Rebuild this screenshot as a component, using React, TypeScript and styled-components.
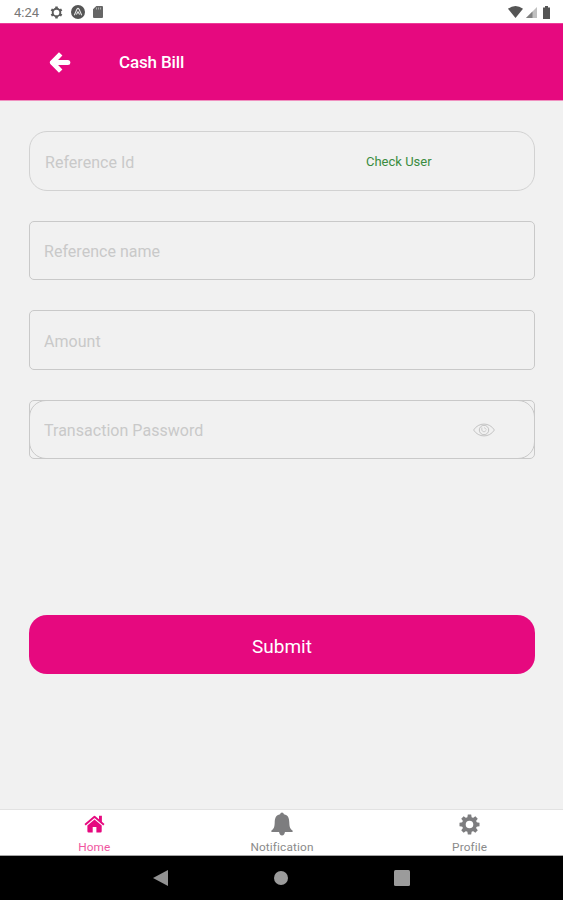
import React from "react";
import styled, { createGlobalStyle } from "styled-components";

const PINK = "#e6097f";

const GlobalStyle = createGlobalStyle`
  * { box-sizing: border-box; }
  body { margin: 0; background: #f1f1f1; font-family: Roboto, "Liberation Sans", sans-serif; }
  button, input { font: inherit; letter-spacing: inherit; }
`;

const Screen = styled.div`
  width: 563px;
  height: 900px;
  display: flex;
  flex-direction: column;
  overflow: hidden;
  background: #f1f1f1;
`;

const StatusBar = styled.div`
  height: 23px;
  flex: none;
  display: flex;
  justify-content: space-between;
  padding: 1px 13px 0 14px;
  background: #fff;
  color: #5c5c5c;
`;

const StatusGroup = styled.div<{ $gap: number }>`
  display: flex;
  align-items: center;
  gap: ${(p) => p.$gap}px;
`;

const Clock = styled.span`
  width: 27px;
  margin-right: 1px;
  font-size: 13px;
  white-space: nowrap;
  color: #777;
`;

const Header = styled.header`
  height: 78px;
  flex: none;
  display: flex;
  align-items: center;
  padding: 0 0 0 49px;
  color: #fff;
  background: ${PINK};
  border-top: 1px solid #ec3d98;
  border-bottom: 1px solid #f091c0;
`;

const BackButton = styled.button`
  display: flex;
  width: 70px;
  padding: 0;
  border: 0;
  background: none;
  color: #fff;
`;

const Title = styled.h1`
  margin: 0;
  font-size: 17px;
  font-weight: 500;
  letter-spacing: -0.15px;
`;

const Form = styled.form`
  flex: 1;
  display: flex;
  flex-direction: column;
  padding: 30px 28px 0 29px;
`;

const Field = styled.div<{ $radius: number; $height: number; $gap: number; $inset: number; $line?: string }>`
  position: relative;
  flex: none;
  display: flex;
  align-items: center;
  height: ${(p) => p.$height}px;
  margin-bottom: ${(p) => p.$gap}px;
  padding-left: ${(p) => p.$inset}px;
  border: 1px solid ${(p) => p.$line ?? "#c9c9c9"};
  border-radius: ${(p) => p.$radius}px;
`;

const InnerOutline = styled.div`
  position: absolute;
  inset: -1px;
  border: 1px solid #c9c9c9;
  border-radius: 17px;
  pointer-events: none;
`;

const Input = styled.input`
  flex: 1;
  min-width: 0;
  padding: 2px 0 0;
  border: 0;
  outline: 0;
  background: none;
  font-size: 16px;
  letter-spacing: 0.03px;
  color: #555;
  &::placeholder { color: #c9c9c9; opacity: 1; }
`;

const CheckUser = styled.button`
  width: 168px;
  padding: 0;
  border: 0;
  background: none;
  text-align: left;
  font-size: 13px;
  color: #3a8c40;
`;

const EyeButton = styled.button`
  display: flex;
  padding: 0;
  margin-right: 39px;
  border: 0;
  background: none;
  color: #c4c4c4;
`;

const Submit = styled.button`
  flex: none;
  height: 59px;
  margin-top: 126px;
  padding: 3px 0 0;
  border: 0;
  border-radius: 18px;
  background: ${PINK};
  color: #fff;
  font-size: 19px;
`;

const TabBar = styled.nav`
  height: 47px;
  flex: none;
  display: grid;
  grid-template-columns: repeat(3, 1fr);
  background: #fff;
  border-top: 1px solid #e2e2e2;
  border-bottom: 1px solid #a5a5a5;
`;

const Tab = styled.a<{ $active?: boolean }>`
  display: flex;
  flex-direction: column;
  align-items: center;
  padding-left: 1px;
  font-size: 11.8px;
  line-height: 14px;
  letter-spacing: 0.15px;
  color: ${(p) => (p.$active ? "#f0569f" : "#8a8a8a")};
  svg { color: ${(p) => (p.$active ? PINK : "#7d7d7f")}; }
`;

const TabIcon = styled.span`
  height: 30px;
  display: flex;
  align-items: center;
  padding-bottom: 2px;
`;

const SystemNav = styled.div`
  height: 44px;
  flex: none;
  display: flex;
  align-items: center;
  justify-content: space-between;
  padding: 0 153px;
  background: #000;
`;

const TEETH = [0, 45, 90, 135, 180, 225, 270, 315];

const GearIcon = () => (
  <svg width="21" height="21" viewBox="0 0 21 21">
    <circle cx="10.5" cy="10.5" r="5.7" fill="none" stroke="currentColor" strokeWidth="3.8" />
    {TEETH.map((a) => (
      <path key={a} d="M8.8.5H12.2L12.7 4H8.3Z" fill="currentColor" transform={`rotate(${a} 10.5 10.5)`} />
    ))}
  </svg>
);

const SmallGearIcon = () => (
  <svg width="13" height="13" viewBox="0 0 13 13">
    <circle cx="6.5" cy="6.5" r="3.8" fill="none" stroke="currentColor" strokeWidth="1.9" />
    {[0, 60, 120, 180, 240, 300].map((a) => (
      <path key={a} d="M5.3.5H7.7L8 3H5Z" fill="currentColor" transform={`rotate(${a} 6.5 6.5)`} />
    ))}
  </svg>
);

const ArrowIcon = () => (
  <svg width="22" height="23" viewBox="0 0 22 23" fill="none" stroke="currentColor" strokeLinejoin="round">
    <path d="M11.7 2.9 3.3 11.5 11.7 20.1" strokeWidth="4.8" />
    <path d="M4 11.5H18.8" strokeWidth="5" strokeLinecap="round" />
  </svg>
);

const HomeIcon = () => (
  <svg width="21" height="18" viewBox="0 0 21 18" fill="currentColor">
    <path d="M10.5 4.4 17.7 10.5V16.2Q17.7 17.4 16.5 17.4H12.4V12H8.7V17.4H4.6Q3.4 17.4 3.4 16.2V10.5Z" />
    <path d="M1.1 9.7 10.5 1.8 19.9 9.7" fill="none" stroke="currentColor" strokeWidth="1.9" strokeLinejoin="round" />
    <path d="M15 .8H17.9V7.5L15 5Z" />
  </svg>
);

const BellIcon = () => (
  <svg width="22" height="24" viewBox="0 0 22 24" fill="currentColor">
    <path d="M11 .6Q12.6.6 12.9 2.3C17.2 3.1 18.2 6.4 18.3 10.4 18.4 15 19.3 17 21.6 18.4V20H.4V18.4C2.7 17 3.6 15 3.7 10.4 3.8 6.4 4.8 3.1 9.1 2.3Q9.4.6 11 .6Z" />
    <path d="M8 19.8H14Q13.5 23.4 11 23.4T8 19.8Z" />
  </svg>
);

const AppBadgeIcon = () => (
  <svg width="14" height="14" viewBox="0 0 14 14">
    <circle cx="7" cy="7" r="7" fill="#555" />
    <path d="M3.3 10.2 5.9 4.2Q7 2.6 8.1 4.2L10.7 10.2M5.4 9.6 7 6.8 8.6 9.6" fill="none" stroke="#e5e5e5" strokeWidth="1.1" />
  </svg>
);

const SdCardIcon = () => (
  <svg width="10" height="12" viewBox="0 0 10 12">
    <path d="M3.3 0H9Q10 0 10 1V11Q10 12 9 12H1Q0 12 0 11V3.3Z" fill="#666" />
    <path d="M3.5 1.5V3.5M5.5 1.5V3.5M7.5 1.5V3.5" stroke="#aaa" />
  </svg>
);

const WifiIcon = () => (
  <svg width="15" height="12" viewBox="0 0 15 12">
    <path d="M0 2.8Q7.5-2.8 15 2.8L7.5 12Z" fill="#555" />
  </svg>
);

const SignalIcon = () => (
  <svg width="11" height="11" viewBox="0 0 11 11">
    <path d="M11 0V11H0Z" fill="#c0c0c0" />
    <path d="M6.5 4.5V11H0Z" fill="#808080" />
  </svg>
);

const BatteryIcon = () => (
  <svg width="7" height="13" viewBox="0 0 7 13">
    <path d="M2 0H5V1.5H7V13H0V1.5H2Z" fill="#555" />
  </svg>
);

const EyeIcon = () => (
  <svg width="22" height="14" viewBox="0 0 22 14" fill="none" stroke="currentColor">
    <path d="M.6 7C5.5-.9 16.5-.9 21.4 7 16.5 14.9 5.5 14.9.6 7Z" />
    <circle cx="11" cy="7" r="4.7" />
    <path d="M8.8 4.5V7.5Q11 10.5 13.2 7.5M11 4.5 13.5 6.5" strokeWidth=".8" />
  </svg>
);

export default function App() {
  return (
    <>
      <GlobalStyle />
      <Screen>
        <StatusBar>
          <StatusGroup $gap={8}>
            <Clock>4:24</Clock>
            <SmallGearIcon />
            <AppBadgeIcon />
            <SdCardIcon />
          </StatusGroup>
          <StatusGroup $gap={3}>
            <WifiIcon />
            <SignalIcon />
            <span />
            <BatteryIcon />
          </StatusGroup>
        </StatusBar>
        <Header>
          <BackButton type="button" aria-label="Back">
            <ArrowIcon />
          </BackButton>
          <Title>Cash Bill</Title>
        </Header>
        <Form onSubmit={(e) => e.preventDefault()}>
          <Field $radius={18} $height={60} $gap={30} $inset={15} $line="#d2d2d2">
            <Input placeholder="Reference Id" />
            <CheckUser type="button">Check User</CheckUser>
          </Field>
          <Field $radius={5} $height={59} $gap={30} $inset={14}>
            <Input placeholder="Reference name" />
          </Field>
          <Field $radius={5} $height={60} $gap={30} $inset={14}>
            <Input placeholder="Amount" />
          </Field>
          <Field $radius={5} $height={59} $gap={30} $inset={14}>
            <InnerOutline />
            <Input placeholder="Transaction Password" />
            <EyeButton type="button" aria-label="Show password">
              <EyeIcon />
            </EyeButton>
          </Field>
          <Submit>Submit</Submit>
        </Form>
        <TabBar>
          <Tab $active>
            <TabIcon><HomeIcon /></TabIcon>
            Home
          </Tab>
          <Tab>
            <TabIcon><BellIcon /></TabIcon>
            Notification
          </Tab>
          <Tab>
            <TabIcon><GearIcon /></TabIcon>
            Profile
          </Tab>
        </TabBar>
        <SystemNav>
          <svg width="15" height="16" viewBox="0 0 15 16"><path d="M15 0V16L0 8Z" fill="#929292" /></svg>
          <svg width="14" height="14" viewBox="0 0 14 14"><circle cx="7" cy="7" r="7" fill="#9b9b9b" /></svg>
          <svg width="16" height="16" viewBox="0 0 16 16"><rect width="16" height="16" rx="1.5" fill="#9b9b9b" /></svg>
        </SystemNav>
      </Screen>
    </>
  );
}
